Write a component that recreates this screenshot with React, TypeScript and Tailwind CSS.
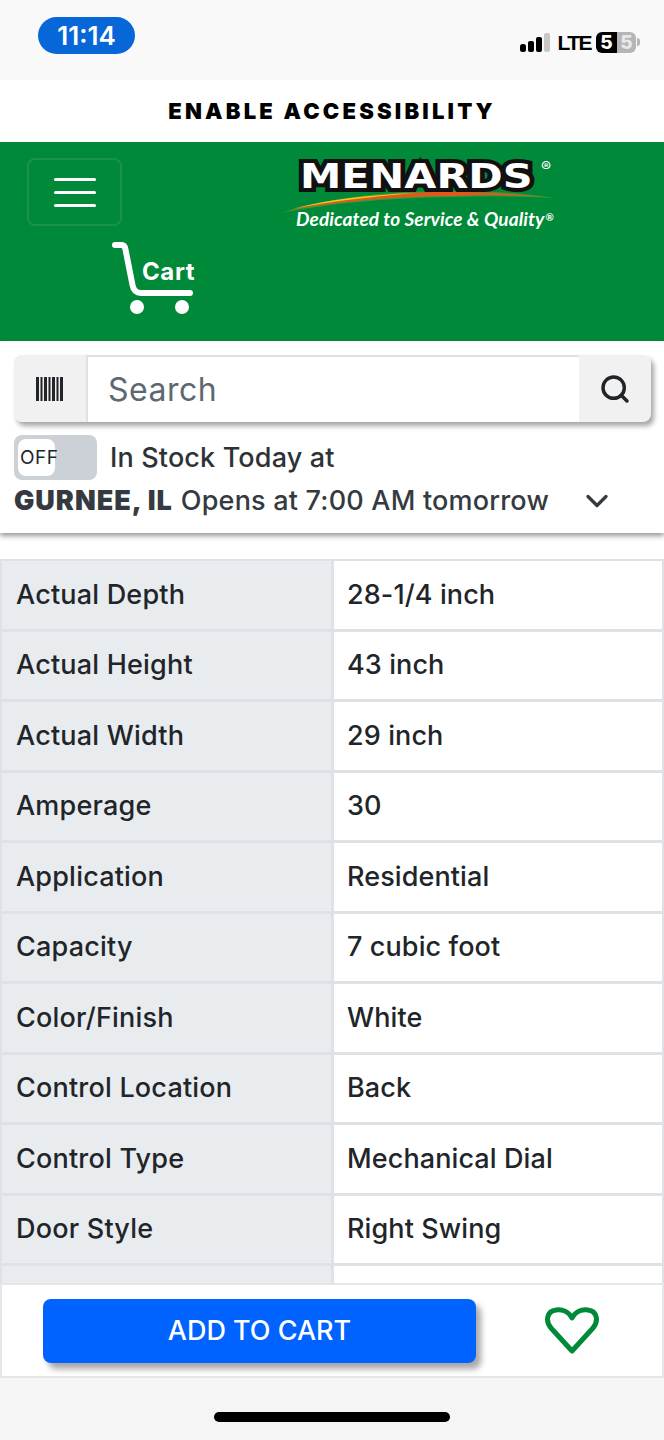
import { ChevronDown, Search } from "lucide-react";

const specs = [
  ["Actual Depth", "28-1/4 inch"],
  ["Actual Height", "43 inch"],
  ["Actual Width", "29 inch"],
  ["Amperage", "30"],
  ["Application", "Residential"],
  ["Capacity", "7 cubic foot"],
  ["Color/Finish", "White"],
  ["Control Location", "Back"],
  ["Control Type", "Mechanical Dial"],
  ["Door Style", "Right Swing"],
  ["", ""],
];

function StatusBar() {
  return (
    <div className="h-[80px] shrink-0 bg-[#f9f9f9] flex items-start justify-between pl-[38px] pr-[24px]">
      <div className="mt-[17px] w-[97px] h-[37px] rounded-full bg-[#0767d8] text-white text-[26px] font-semibold flex items-center justify-center">
        11:14
      </div>
      <div className="mt-[29px] flex items-center h-[26px]">
        <svg width="31" height="19" viewBox="0 0 31 19">
          <rect x="0" y="11" width="6" height="8" rx="2.5" fill="#000" />
          <rect x="8" y="8" width="6" height="11" rx="2" fill="#000" />
          <rect x="16" y="4" width="6" height="15" rx="2" fill="#000" />
          <rect x="24" y="0" width="6" height="19" rx="2" fill="#c8c8c8" />
        </svg>
        <span className="ml-[6px] text-[21px] font-bold text-black leading-none tracking-[-1.5px] [font-family:'Liberation_Sans',sans-serif]">LTE</span>
        <div className="ml-[5px] flex items-center">
          <div className="flex w-[40px] h-[21px] rounded-[6px] overflow-hidden text-[19px] font-extrabold leading-[21px] text-center">
            <span className="w-[21px] bg-black text-white">5</span>
            <span className="w-[19px] bg-[#b5b5b5] text-[#e8e8e8]">5</span>
          </div>
          <div className="ml-[1px] w-[3px] h-[8px] rounded-r-full bg-[#b5b5b5]" />
        </div>
      </div>
    </div>
  );
}

function MenardsLogo() {
  return (
    <div className="relative w-[276px] h-[78px]">
      <svg className="absolute left-0 top-[36px]" width="276" height="26" viewBox="0 0 276 26">
        <path d="M1 24 C 50 8, 110 2, 170 2 C 210 2, 245 4, 274 9 C 240 7, 205 7, 170 8 C 110 9, 50 14, 1 24 Z" fill="#2f9e3a" />
        <path d="M8 22 C 50 9, 110 3, 170 3 C 210 3, 240 5, 266 8 C 235 6, 205 6, 170 7 C 110 8, 50 13, 8 22 Z" fill="#e4571b" />
        <path d="M12 20 C 50 10, 90 6, 135 4 C 90 8, 50 12, 12 20 Z" fill="#e6d21c" />
      </svg>
      <div className="absolute left-[20px] top-[3px] origin-left scale-x-[1.22] text-[34px] leading-[40px] text-white font-black [font-family:'DejaVu_Sans',sans-serif] [-webkit-text-stroke:8px_#111] [paint-order:stroke_fill]">
        MENARDS
      </div>
      <span className="absolute left-[261px] top-[6px] text-[15px] text-white leading-none">®</span>
      <div className="absolute left-[16px] top-[55px] text-[19px] leading-[22px] tracking-[0.1px] text-white italic font-bold whitespace-nowrap [font-family:Lato,sans-serif]">
        Dedicated to Service &amp; Quality<sup className="text-[10px] ml-[1px]">®</sup>
      </div>
    </div>
  );
}

export default function App() {
  return (
    <div className="w-[664px] h-[1440px] flex flex-col overflow-hidden bg-white text-[#212529] [font-family:Inter,sans-serif]">
      <StatusBar />

      <div className="h-[62px] shrink-0 bg-white flex items-center justify-center text-[22px] font-black tracking-[3.2px] text-black">
        ENABLE ACCESSIBILITY
      </div>

      {/* Header */}
      <div className="h-[199px] shrink-0 bg-[#008938] flex items-start">
        <div className="pl-[27px] pt-[16px] w-[280px] shrink-0">
          <div className="w-[95px] h-[68px] rounded-[8px] border-2 border-[#189449] flex flex-col items-center justify-center gap-[10px]">
            <div className="w-[42px] h-[3px] rounded-full bg-white" />
            <div className="w-[42px] h-[3px] rounded-full bg-white" />
            <div className="w-[42px] h-[3px] rounded-full bg-white" />
          </div>
          <div className="relative ml-[85px] mt-[15px] w-[84px] h-[74px]">
            <svg width="84" height="74" viewBox="0 0 84 74" fill="none">
              <path d="M3 4 H9 C11.500 4 12.800 5 13.300 7.500 L20.500 44 C21.500 49.500 24 52 29 52 H78" stroke="#fff" strokeWidth="6" strokeLinecap="round" strokeLinejoin="round" />
              <circle cx="25" cy="66" r="7" fill="#fff" />
              <circle cx="70" cy="66" r="7" fill="#fff" />
            </svg>
            <span className="absolute left-[30px] top-[17px] text-[24px] leading-[28px] font-bold tracking-[0.6px] text-white">Cart</span>
          </div>
        </div>
        <div className="pt-[11px] shrink-0">
          <MenardsLogo />
        </div>
      </div>

      {/* Search + store */}
      <div className="h-[192px] shrink-0 bg-white shadow-[0_3px_5px_rgba(0,0,0,0.4)] px-[14px] pt-[14px] relative z-10">
        <div className="h-[67px] w-[637px] flex rounded-[8px] bg-[#f1f1f2] shadow-[3px_4px_5px_rgba(0,0,0,0.35)] overflow-hidden">
          <div className="w-[72px] shrink-0 flex items-center justify-center">
            <svg width="28" height="24" viewBox="0 0 28 24" fill="#212529">
              <rect x="0" y="0" width="3" height="24" />
              <rect x="4.500" y="0" width="2" height="24" />
              <rect x="8" y="0" width="3" height="24" />
              <rect x="12.500" y="0" width="2" height="24" />
              <rect x="16" y="0" width="3" height="24" />
              <rect x="20.500" y="0" width="2" height="24" />
              <rect x="24" y="0" width="3" height="24" />
            </svg>
          </div>
          <div className="flex-1 bg-white border-2 border-[#dee2e6] border-r-0 border-b-0 flex items-center pl-[20px] text-[32px] tracking-[0.5px] text-[#5e6871]">
            Search
          </div>
          <div className="w-[72px] shrink-0 flex items-center justify-center">
            <Search size={32} strokeWidth={2.6} className="text-[#212529]" />
          </div>
        </div>

        <div className="mt-[13px] flex items-center h-[47px]">
          <div className="-mt-[2px] w-[83px] h-[45px] rounded-[8px] bg-[#ccd1d8] p-[4px]">
            <div className="w-[37px] h-[37px] rounded-[8px] bg-white flex items-center justify-start pl-[2px] text-[19px] tracking-[0.5px] leading-none text-[#212529]">
              OFF
            </div>
          </div>
          <span className="ml-[13px] text-[27px] font-medium tracking-[0.15px] text-[#2d3237]">In Stock Today at</span>
        </div>
        <div className="-mt-[1px] flex items-center h-[40px] text-[27px] text-[#343a40] whitespace-nowrap">
          <span className="font-black tracking-[1px]">GURNEE, IL</span>
          <span className="ml-[8px] font-medium tracking-[0.2px]">Opens at 7:00 AM tomorrow</span>
          <ChevronDown size={36} strokeWidth={2.2} className="ml-[30px] text-[#343a40]" />
        </div>
      </div>

      {/* Spec table */}
      <div className="flex-1 min-h-0 overflow-hidden mt-[26px] border-x-2 border-t-2 border-[#dee2e6] relative">
        {specs.map(([name, value], i) => (
          <div key={i} className="flex h-[70.5px] border-b-[3px] border-[#dee2e6] text-[27px] font-medium text-[#212529]">
            <div className="w-[332px] shrink-0 bg-[#e9ecef] border-r-[3px] border-[#dee2e6] flex items-center pl-[14px] tracking-[0.2px]">{name}</div>
            <div className="flex-1 bg-white flex items-center pl-[13px] tracking-[0.1px]">{value}</div>
          </div>
        ))}
      </div>

      {/* Add to cart bar */}
      <div className="h-[95px] shrink-0 bg-white border-2 border-[#e4e6ea] flex items-center pl-[41px]">
        <button className="w-[433px] h-[64px] mt-[1px] rounded-[8px] bg-[#0062ff] text-white text-[27px] font-medium shadow-[5px_6px_6px_rgba(0,0,0,0.35)]">
          ADD TO CART
        </button>
        <svg className="ml-[68px] mt-[1px]" width="56" height="48" viewBox="0 0 56 48" fill="none">
          <path d="M28 44 L7 21 C1 14 3 4 12 3 C19 2 25 5 28 11 C31 5 37 2 44 3 C53 4 55 14 49 21 Z" stroke="#008938" strokeWidth="5" strokeLinejoin="round" />
        </svg>
      </div>

      {/* Home indicator */}
      <div className="h-[62px] shrink-0 bg-[#f5f5f5] flex justify-center pt-[34px]">
        <div className="w-[236px] h-[10px] rounded-full bg-black" />
      </div>
    </div>
  );
}
